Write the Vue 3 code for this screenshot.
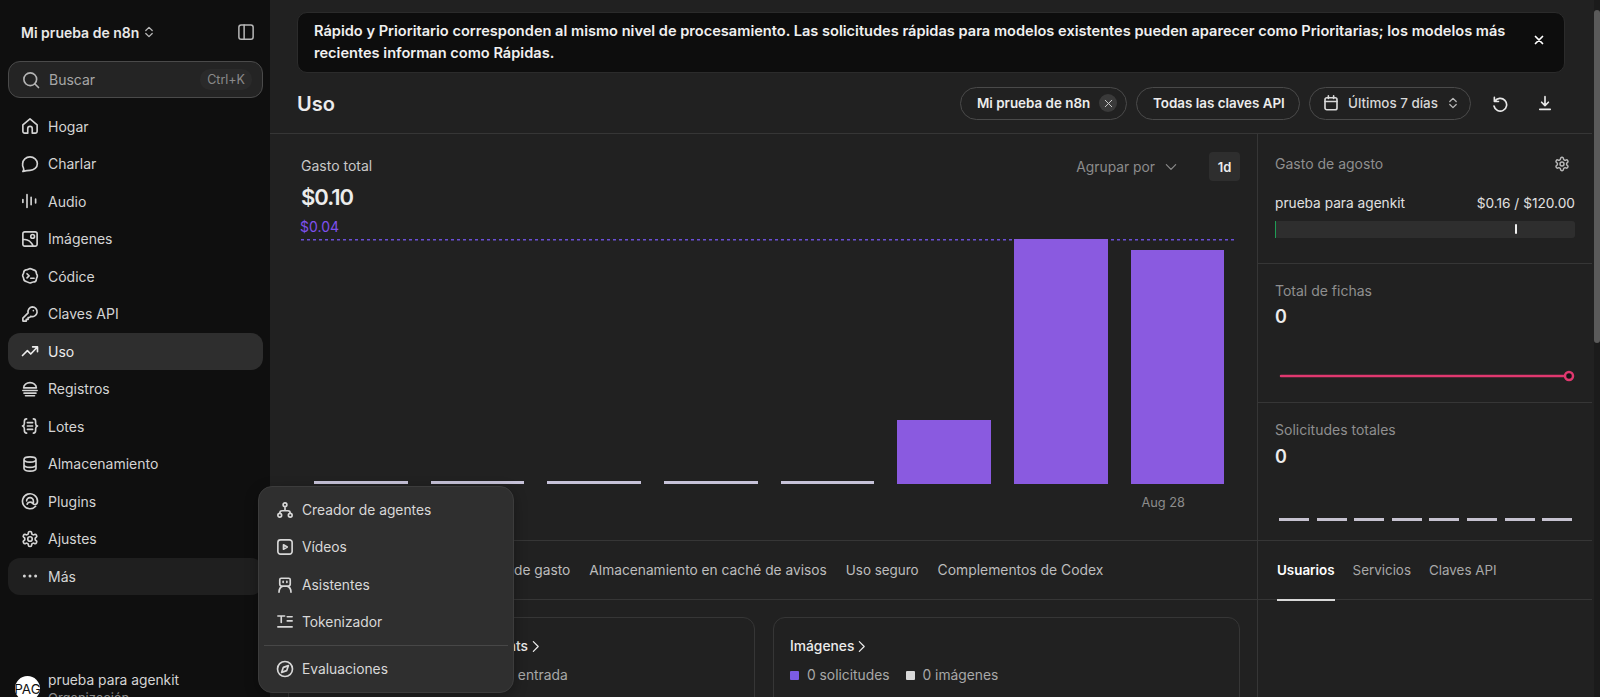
<script setup>
const nav = [
  { label: 'Hogar', icon: 'home' },
  { label: 'Charlar', icon: 'chat' },
  { label: 'Audio', icon: 'audio' },
  { label: 'Imágenes', icon: 'image' },
  { label: 'Códice', icon: 'codex' },
  { label: 'Claves API', icon: 'key' },
  { label: 'Uso', icon: 'trend', active: true },
  { label: 'Registros', icon: 'logs' },
  { label: 'Lotes', icon: 'batch' },
  { label: 'Almacenamiento', icon: 'db' },
  { label: 'Plugins', icon: 'plugin' },
  { label: 'Ajustes', icon: 'gear' },
  { label: 'Más', icon: 'dots', hover: true },
]
const gear = 'M12.220 2h-.440a2 2 0 0 0-2 2v.180a2 2 0 0 1-1 1.730l-.430.250a2 2 0 0 1-2 0l-.150-.080a2 2 0 0 0-2.730.730l-.220.380a2 2 0 0 0 .730 2.730l.150.100a2 2 0 0 1 1 1.720v.510a2 2 0 0 1-1 1.740l-.150.090a2 2 0 0 0-.730 2.730l.220.380a2 2 0 0 0 2.730.730l.150-.080a2 2 0 0 1 2 0l.430.250a2 2 0 0 1 1 1.730V20a2 2 0 0 0 2 2h.440a2 2 0 0 0 2-2v-.180a2 2 0 0 1 1-1.730l.430-.250a2 2 0 0 1 2 0l.150.080a2 2 0 0 0 2.730-.730l.220-.390a2 2 0 0 0-.730-2.730l-.150-.080a2 2 0 0 1-1-1.740v-.500a2 2 0 0 1 1-1.740l.150-.090a2 2 0 0 0 .730-2.730l-.220-.380a2 2 0 0 0-2.730-.730l-.150.080a2 2 0 0 1-2 0l-.430-.250a2 2 0 0 1-1-1.730V4a2 2 0 0 0-2-2zM15 12a3 3 0 1 1-6 0 3 3 0 0 1 6 0z'
const icons = {
  home: 'M2.500 10.500 12 2.500l9.500 8V19a2.500 2.500 0 0 1-2.500 2.500H15V15.500a3 3 0 0 0-6 0v6H5A2.500 2.500 0 0 1 2.500 19z',
  chat: 'M12 2.500c5.300 0 9.800 3.900 9.800 9s-4.500 9-9.800 9c-2.500 0-5.500.4-9.500 1.500 1.500-1.800 1.600-3.200.7-4.800A8.500 8.500 0 0 1 2.200 11.500C2.200 6.400 6.700 2.500 12 2.500z',
  audio: 'M2.500 10v4M8 3.500v17M13.500 7v10M19.500 9.500v5',
  image: 'M5 2.500h14A2.500 2.500 0 0 1 21.500 5v14a2.500 2.500 0 0 1-2.500 2.500H5A2.500 2.500 0 0 1 2.500 19V5A2.500 2.500 0 0 1 5 2.500zM2.500 13c6-1.500 10 1 14 8.500M18 8.500a2.500 2.500 0 1 1-5 0 2.500 2.500 0 0 1 5 0z',
  codex: 'M12 2.200c2 0 3 1.300 4.700 1.700 2.700.6 3.800 2.100 3.800 4.300 0 1.500 1.300 2.200 1.300 3.800s-1.300 2.600-1.300 4.200c0 2.700-2.100 3.800-4.200 3.800-1.600 0-2.700 1.300-4.300 1.300s-2.600-1.300-4.200-1.600c-2.700-.6-4.300-2.200-4.300-4.400 0-1.500-1.300-2.100-1.300-3.900S3.500 9 3.500 8c0-2.700 2.100-4.300 4.300-4.500C9.400 3.300 10.400 2.200 12 2.200zM8 9l2.800 2.800L8 14.600M13 15h4.500',
  key: 'M15 2.500a6.500 6.500 0 1 1-2 12.700L11.500 16.700H9.500v2.500H7v2.300H3c-.4 0-.5-.2-.5-.5v-3.500l7-7A6.500 6.500 0 0 1 15 2.500zM16.500 7.500h.01',
  trend: 'M2 18l6.500-6.500 4.500 4.500 8.500-9M15.500 6.500H22V13',
  logs: 'M3.500 10.500c0-4.200 4-7 8.500-7s8.500 2.800 8.500 7zM2.500 14h19M4 17.500h16M6 21h12',
  batch: 'M7.500 2.500C5 2.500 4.500 3.500 4.500 6v2.500c0 2-.7 3-2.500 3.500 1.800.5 2.500 1.500 2.500 3.500V18c0 2.500.5 3.500 3 3.500M16.500 2.500c2.500 0 3 1 3 3.500v2.500c0 2 .7 3 2.500 3.500-1.800.5-2.500 1.500-2.500 3.500V18c0 2.500-.5 3.500-3 3.500M8.500 7.500h7M8.500 12h7M8.500 16.500h7',
  db: 'M4 6c0-2.100 3.600-3.500 8-3.500s8 1.400 8 3.500v12c0 2.100-3.600 3.500-8 3.500S4 20.100 4 18zM4 6c0 2.100 3.600 3.500 8 3.500s8-1.400 8-3.500M4 13c0 2.100 3.600 3.500 8 3.500s8-1.400 8-3.500',
  plugin: 'M19.500 19A10 10 0 1 1 22 12c0 3-1.500 4.700-3.500 4.700-3 0-3-3.200-6-3.200-2.300 0-3.800 1-4.300 2.800M7.500 12a4.500 4.500 0 0 1 9 0M16.500 12v3',
  gear,
  agents: 'M14.500 5a2.500 2.500 0 1 1-5 0 2.500 2.500 0 0 1 5 0zM7.500 19a2.500 2.500 0 1 1-5 0 2.500 2.500 0 0 1 5 0zM21.500 19a2.500 2.500 0 1 1-5 0 2.500 2.500 0 0 1 5 0zM12 7.500V13M5 16.500c0-2.300 1-3.500 3-3.500h8c2 0 3 1.200 3 3.500',
  video: 'M6 2.500h12A3.500 3.500 0 0 1 21.500 6v12a3.500 3.500 0 0 1-3.500 3.500H6A3.500 3.500 0 0 1 2.500 18V6A3.500 3.500 0 0 1 6 2.500zM10 9l5 3-5 3z',
  robot: 'M7 3h10a2 2 0 0 1 2 2v5.500a3 3 0 0 1-3 3H8a3 3 0 0 1-3-3V5a2 2 0 0 1 2-2zM9.500 7v1.500M14.500 7v1.500M4 21.500c0-3.800 2.500-7 5-8M20 21.500c0-3.800-2.500-7-5-8',
  token: 'M2.500 4h9M7 4v8.500M15 5h6.500M15 10.500h6.500M2.500 18.500h19',
  compass: 'M22 12a10 10 0 1 1-20 0 10 10 0 0 1 20 0zM16.500 7.500l-2.300 6.700-6.700 2.300 2.300-6.700z',
}
const menu = [
  { label: 'Creador de agentes', icon: 'agents' },
  { label: 'Vídeos', icon: 'video' },
  { label: 'Asistentes', icon: 'robot' },
  { label: 'Tokenizador', icon: 'token' },
]
const bars = [3, 3, 3, 3, 3, 64, 245, 234]
const tabs = ['Límites de gasto', 'Almacenamiento en caché de avisos', 'Uso seguro', 'Complementos de Codex']
</script>

<template>
  <div class="app">
    <aside class="sidebar">
      <div class="org">
        <span class="org-name">Mi prueba de n8n</span>
        <svg class="chev" viewBox="0 0 24 24"><path d="M6.500 9.500 12 4l5.500 5.500M6.500 14.500 12 20l5.500-5.500" /></svg>
        <svg class="panel-ico" viewBox="0 0 24 24"><rect x="2.500" y="2.500" width="19" height="19" rx="3" /><path d="M9.500 2.500v19" /></svg>
      </div>
      <div class="search">
        <svg class="ico" viewBox="0 0 24 24"><circle cx="11" cy="11" r="8.500" /><path d="M17 17l5 5" /></svg>
        <span class="search-text">Buscar</span>
        <span class="kbd">Ctrl+K</span>
      </div>
      <nav class="nav">
        <div v-for="n in nav" :key="n.label" class="nav-row" :class="{ active: n.active, hover: n.hover }">
          <svg v-if="n.icon === 'dots'" class="ico" viewBox="0 0 24 24"><circle cx="4.500" cy="12" r="2" class="dot" /><circle cx="12" cy="12" r="2" class="dot" /><circle cx="19.500" cy="12" r="2" class="dot" /></svg>
          <svg v-else class="ico" viewBox="0 0 24 24"><path :d="icons[n.icon]" /></svg>
          <span>{{ n.label }}</span>
        </div>
      </nav>
      <div class="account">
        <div class="avatar"><span>PAG</span></div>
        <div class="acc-text">
          <div class="acc-name">prueba para agenkit</div>
          <div class="acc-sub">Organización</div>
        </div>
      </div>
    </aside>

    <main class="main">
      <div class="banner-wrap">
        <div class="banner">
          <p>Rápido y Prioritario corresponden al mismo nivel de procesamiento. Las solicitudes rápidas para modelos existentes pueden aparecer como Prioritarias; los modelos más recientes informan como Rápidas.</p>
          <svg class="close" viewBox="0 0 24 24"><path d="M6 6l12 12M18 6 6 18" /></svg>
        </div>
      </div>

      <header class="topbar">
        <h1>Uso</h1>
        <div class="actions">
          <div class="pill w1">Mi prueba de n8n
            <span class="x-wrap"><svg viewBox="0 0 24 24"><path d="M6 6l12 12M18 6 6 18" /></svg></span>
          </div>
          <div class="pill w2">Todas las claves API</div>
          <div class="pill w3">
            <svg class="ico" viewBox="0 0 24 24"><rect x="4" y="5" width="16" height="16" rx="2.500" /><path d="M4 10h16M8.500 2.500V6M15.500 2.500V6" /></svg>
            <span>Últimos 7 días</span>
            <svg class="chev" viewBox="0 0 24 24"><path d="M6.500 9.500 12 4l5.500 5.500M6.500 14.500 12 20l5.500-5.500" /></svg>
          </div>
          <svg class="ico act a1" viewBox="0 0 24 24"><path d="M4.500 4.500V10H10M5 10a8.500 8.500 0 1 1-1 6" /></svg>
          <svg class="ico act a2" viewBox="0 0 24 24"><path d="M12 3.500V15.500M7.500 11l4.500 4.500 4.500-4.500M5 20.500h14" /></svg>
        </div>
      </header>

      <div class="body">
        <div class="left">
          <section class="chart">
            <div class="chart-head">
              <div class="totals">
                <div class="t-label">Gasto total</div>
                <div class="t-value">$0.10</div>
                <div class="t-limit">$0.04</div>
              </div>
              <div class="controls">
                <span class="group">Agrupar por</span>
                <svg class="chev-d" viewBox="0 0 24 24"><path d="M4 8l8 8 8-8" /></svg>
                <span class="range">1d</span>
              </div>
            </div>
            <div class="plot">
              <div v-for="(h, i) in bars" :key="i" class="bar" :class="{ flat: h < 5 }" :style="{ height: h + 'px' }"></div>
            </div>
            <div class="x-label">Aug 28</div>
          </section>

          <div class="tabs-row">
            <span v-for="t in tabs" :key="t">{{ t }}</span>
          </div>

          <div class="cards">
            <div class="card c1">
              <div class="card-title"><span>Respuestas y Agents</span>
                <svg viewBox="0 0 24 24"><path d="M8 3l9 9-9 9" /></svg>
              </div>
              <div class="legend">
                <i class="sw sw-a"></i><span>0 solicitudes</span>
                <i class="sw sw-b"></i><span>0 fichas de entrada</span>
              </div>
            </div>
            <div class="card">
              <div class="card-title"><span>Imágenes</span>
                <svg viewBox="0 0 24 24"><path d="M8 3l9 9-9 9" /></svg>
              </div>
              <div class="legend">
                <i class="sw sw-a"></i><span>0 solicitudes</span>
                <i class="sw sw-b"></i><span>0 imágenes</span>
              </div>
            </div>
          </div>
        </div>

        <div class="right">
          <section class="stat s1">
            <div class="stat-head">
              <span class="dim">Gasto de agosto</span>
              <svg class="gear" viewBox="0 0 24 24"><path :d="icons.gear" /></svg>
            </div>
            <div class="budget">
              <span>prueba para agenkit</span>
              <span>$0.16 / $120.00</span>
            </div>
            <div class="meter"><i class="m-fill"></i><i class="m-mark"></i></div>
          </section>
          <section class="stat s2">
            <div class="dim">Total de fichas</div>
            <div class="num">0</div>
            <svg class="spark" viewBox="0 0 317 14"><path d="M6 7H294" /><circle cx="294" cy="7" r="4" /></svg>
          </section>
          <section class="stat s3">
            <div class="dim">Solicitudes totales</div>
            <div class="num">0</div>
            <div class="dashes"><i v-for="n in 8" :key="n"></i></div>
          </section>
          <div class="r-tabs">
            <span class="on">Usuarios</span>
            <span>Servicios</span>
            <span>Claves API</span>
          </div>
        </div>
      </div>

      <div class="scrollbar"><i></i></div>
    </main>

    <div class="popover">
      <div v-for="m in menu" :key="m.label" class="pop-row">
        <svg class="ico" viewBox="0 0 24 24"><path :d="icons[m.icon]" /></svg>
        <span>{{ m.label }}</span>
      </div>
      <div class="pop-sep"></div>
      <div class="pop-row">
        <svg class="ico" viewBox="0 0 24 24"><path :d="icons.compass" /></svg>
        <span>Evaluaciones</span>
      </div>
    </div>
  </div>
</template>

<style>
html, body { margin: 0; background: #212121; overflow: hidden; }
</style>

<style scoped>
.app {
  position: relative;
  display: flex;
  width: 1600px;
  height: 697px;
  overflow: hidden;
  font-family: Inter, "Noto Sans", sans-serif;
  font-size: 14px;
  color: #ececec;
  background: #212121;
}
svg { fill: none; stroke: currentColor; stroke-width: 2.200; stroke-linecap: round; stroke-linejoin: round; flex: none; }
.ico { width: 18px; height: 18px; }

.sidebar { width: 270px; flex: none; height: 697px; background: #0f0f0f; display: flex; flex-direction: column; overflow: hidden; }
.org { display: flex; align-items: center; height: 24px; margin: 20px 0 17px; padding: 0 15px 0 21px; }
.org-name { font-weight: 600; color: #e8e8e8; }
.chev { width: 14px; height: 14px; margin-left: 3px; color: #b8b8b8; }
.panel-ico { width: 18px; height: 18px; margin-left: auto; color: #b8b8b8; stroke-width: 2; }
.search { display: flex; align-items: center; height: 37px; margin: 0 7px 0 8px; padding: 0 10px 0 13px; border: 1px solid #4a4a4a; border-radius: 12px; background: #242424; box-sizing: border-box; color: #b4b4b4; }
.search-text { margin-left: 9px; color: #a6a6a6; }
.kbd { margin-left: auto; padding: 3px 7px; border-radius: 10px; background: #2a2a2a; color: #8a8a8a; font-size: 12.500px; }
.nav { margin-top: 9.500px; }
.nav-row { display: flex; align-items: center; gap: 9px; height: 37.500px; margin: 0 7px 0 8px; padding: 0 13px; border-radius: 12px; color: #d4d4d4; }
.nav-row.active { background: #2e2e2e; color: #ececec; }
.nav-row.hover { background: #1f1f1f; }
.dot { fill: currentColor; stroke: none; }
.account { position: relative; display: flex; gap: 8px; margin-top: auto; padding-left: 15px; height: 26px; top: 3px; }
.avatar { width: 25px; height: 25px; margin-top: 2px; border-radius: 50%; background: #fff; color: #111; font-size: 13.500px; display: flex; align-items: center; justify-content: center; overflow: hidden; }
.acc-text { margin-top: -3px; }
.acc-name { color: #d4d4d4; line-height: 18px; font-size: 13.800px; }
.acc-sub { color: #8a8a8a; font-size: 13px; line-height: 18px; }

.main { position: relative; flex: 1; min-width: 0; }
.banner-wrap { padding: 12px 35px 0 27px; }
.banner { display: flex; align-items: center; height: 61px; box-sizing: border-box; padding: 0 17px 0 16px; border: 1px solid #2b2b2b; border-radius: 10px; background: #0d0d0d; }
.banner p { margin: 0; width: 1200px; font-weight: 600; font-size: 14.600px; line-height: 21.500px; color: #f0f0f0; }
.close { width: 14px; height: 14px; margin: 0 1px 6px auto; stroke-width: 3; color: #fff; }
.topbar { display: flex; align-items: center; justify-content: space-between; height: 61px; box-sizing: border-box; margin-right: 8px; padding: 0 0 0 27px; border-bottom: 1px solid #363636; }
h1 { margin: 2px 0 0; font-size: 20px; font-weight: 600; color: #ececec; }
.actions { display: flex; align-items: center; gap: 9px; }
.pill { display: flex; align-items: center; height: 33px; box-sizing: border-box; padding: 0 16px; border: 1px solid #4a4a4a; border-radius: 17px; font-size: 13.400px; font-weight: 600; white-space: nowrap; color: #ececec; }
.w1 { width: 167px; padding-right: 9px; justify-content: space-between; }
.w2 { width: 164px; }
.w3 { width: 162px; padding: 0 12px; font-weight: 500; gap: 8px; color: #d8d8d8; }
.w3 .chev { margin-left: auto; }
.x-wrap { display: flex; align-items: center; justify-content: center; width: 18px; height: 18px; border-radius: 50%; background: #3a3a3a; }
.x-wrap svg { width: 13px; height: 13px; stroke-width: 1.800; color: #ccc; }
.act { color: #e8e8e8; }
.a1 { margin-left: 11px; }
.a2 { margin-left: 18px; margin-right: 38px; }

.body { display: flex; margin-right: 8px; height: 563px; }
.left { width: 987px; flex: none; }
.chart { height: 407px; box-sizing: border-box; padding: 18px 17px 0 31px; border-bottom: 1px solid #363636; }
.chart-head { display: flex; justify-content: space-between; align-items: flex-start; height: 87px; }
.t-label { margin-top: 4px; line-height: 20px; color: #c8c8c8; }
.t-value { margin-top: 6px; font-size: 22px; line-height: 30px; font-weight: 600; letter-spacing: -1px; color: #ececec; }
.t-limit { margin-top: 6px; margin-left: -1px; line-height: 18px; font-size: 14px; color: #7f50ee; }
.controls { display: flex; align-items: center; height: 29px; color: #8c8c8c; }
.chev-d { width: 14px; height: 14px; margin-left: 9px; color: #8c8c8c; stroke-width: 2; }
.group { font-size: 13.800px; }
.range { display: flex; align-items: center; justify-content: center; width: 31px; height: 29px; margin-left: 31px; border-radius: 4px; background: #2e2e2e; color: #ececec; font-weight: 600; font-size: 13px; }
.plot {
  display: flex; align-items: flex-end; gap: 23.200px; height: 245px; margin-right: 3px; padding: 0 13px;
  background: repeating-linear-gradient(to right, #6a4ed6 0 3px, transparent 3px 6px) top / 100% 1.500px no-repeat;
}
.bar { width: 93.500px; flex: none; background: #8a5ae0; }
.bar.flat { background: #c6c2d8; }
.x-label { margin-top: 10px; padding-right: 55px; text-align: right; font-size: 12.800px; line-height: 18px; color: #8c8c8c; }
.tabs-row { display: flex; gap: 19px; height: 59px; align-items: center; box-sizing: border-box; padding-left: 194px; border-bottom: 1px solid #363636; color: #bdbdbd; font-size: 13.750px; white-space: nowrap; }
.tabs-row span:nth-child(3) { font-size: 13.400px; }
.tabs-row span:nth-child(4) { font-size: 13.900px; }
.cards { display: flex; gap: 18px; padding: 17px 17px 0 18px; }
.card { flex: 1; height: 120px; box-sizing: border-box; padding: 18px 16px; border: 1px solid #363636; border-radius: 12px; }
.card-title { display: flex; align-items: center; gap: 1px; line-height: 20px; font-size: 13.800px; font-weight: 500; color: #ececec; white-space: nowrap; }
.c1 .card-title { justify-content: flex-end; width: 237px; }
.c1 .sw-b { margin-left: 20px; }
.card-title svg { width: 13px; height: 13px; }
.legend { display: flex; align-items: center; margin-top: 9px; line-height: 20px; font-size: 13.800px; color: #a8a8a8; white-space: nowrap; }
.sw { width: 9px; height: 9px; border-radius: 1px; margin-right: 8px; }
.sw-a { background: #7b5ce6; }
.sw-b { background: #d8d8d8; margin-left: 16px; }

.right { flex: 1; min-width: 0; border-left: 1px solid #363636; }
.stat { box-sizing: border-box; padding: 0 17px; border-bottom: 1px solid #363636; }
.s1 { height: 130px; padding: 20px 17px 0 17px; }
.s2 { height: 139px; padding-top: 17px; }
.s3 { height: 138px; padding-top: 17px; }
.stat-head { display: flex; justify-content: space-between; align-items: center; height: 20px; }
.dim { color: #8f8f8f; line-height: 20px; }
.gear { width: 16px; height: 16px; margin-right: 5px; color: #b8b8b8; stroke-width: 2.200; }
.budget { display: flex; justify-content: space-between; margin-top: 19px; line-height: 20px; font-size: 13.700px; color: #e0e0e0; }
.meter { position: relative; height: 17px; margin-top: 8px; border-radius: 3px; background: #2e2e2e; }
.m-fill { position: absolute; left: 0; top: 0; bottom: 0; width: 1px; background: #1f9d55; }
.m-mark { position: absolute; left: 239.500px; top: 3px; width: 2.500px; height: 10px; border-radius: 1px; background: #f0f0f0; }
.num { margin-top: 4px; line-height: 24px; font-size: 18px; font-weight: 600; color: #ececec; }
.spark { display: block; width: 317px; height: 14px; margin-top: 39.500px; stroke: #e0386f; stroke-width: 2.500; }
.spark circle { fill: #141414; }
.s3 .num { margin-top: 4.500px; }
.dashes { display: flex; gap: 7.600px; margin: 49.500px 0 0 4px; }
.dashes i { width: 30px; height: 3px; background: #c6c2d0; }
.r-tabs { display: flex; gap: 18px; height: 59px; align-items: center; box-sizing: border-box; padding-left: 19px; border-bottom: 1px solid #363636; font-size: 13.400px; color: #a8a8a8; }
.r-tabs .on { position: relative; font-weight: 600; color: #fff; }
.r-tabs .on::after { content: ""; position: absolute; left: 0; right: 0; top: 36.500px; height: 2px; background: #d8d8d8; }

.scrollbar { position: absolute; right: 0; top: 0; bottom: 0; width: 6px; background: #1b1b1b; }
.scrollbar i { position: absolute; left: 0; top: 10px; width: 6px; height: 333px; border-radius: 3px; background: #5a5a5a; }

.popover { position: absolute; left: 258px; top: 486px; width: 256px; height: 207px; box-sizing: border-box; padding: 4px 5px 0; border: 1px solid #3c3c3c; border-radius: 14px; background: #2f2f2f; box-shadow: 0 4px 14px rgba(0,0,0,.3); font-size: 13.800px; }
.pop-row { display: flex; align-items: center; gap: 8px; height: 37.500px; padding-left: 12px; color: #d8d8d8; }
.pop-sep { height: 1px; margin: 4px 0 4px; background: #474747; }
</style>
